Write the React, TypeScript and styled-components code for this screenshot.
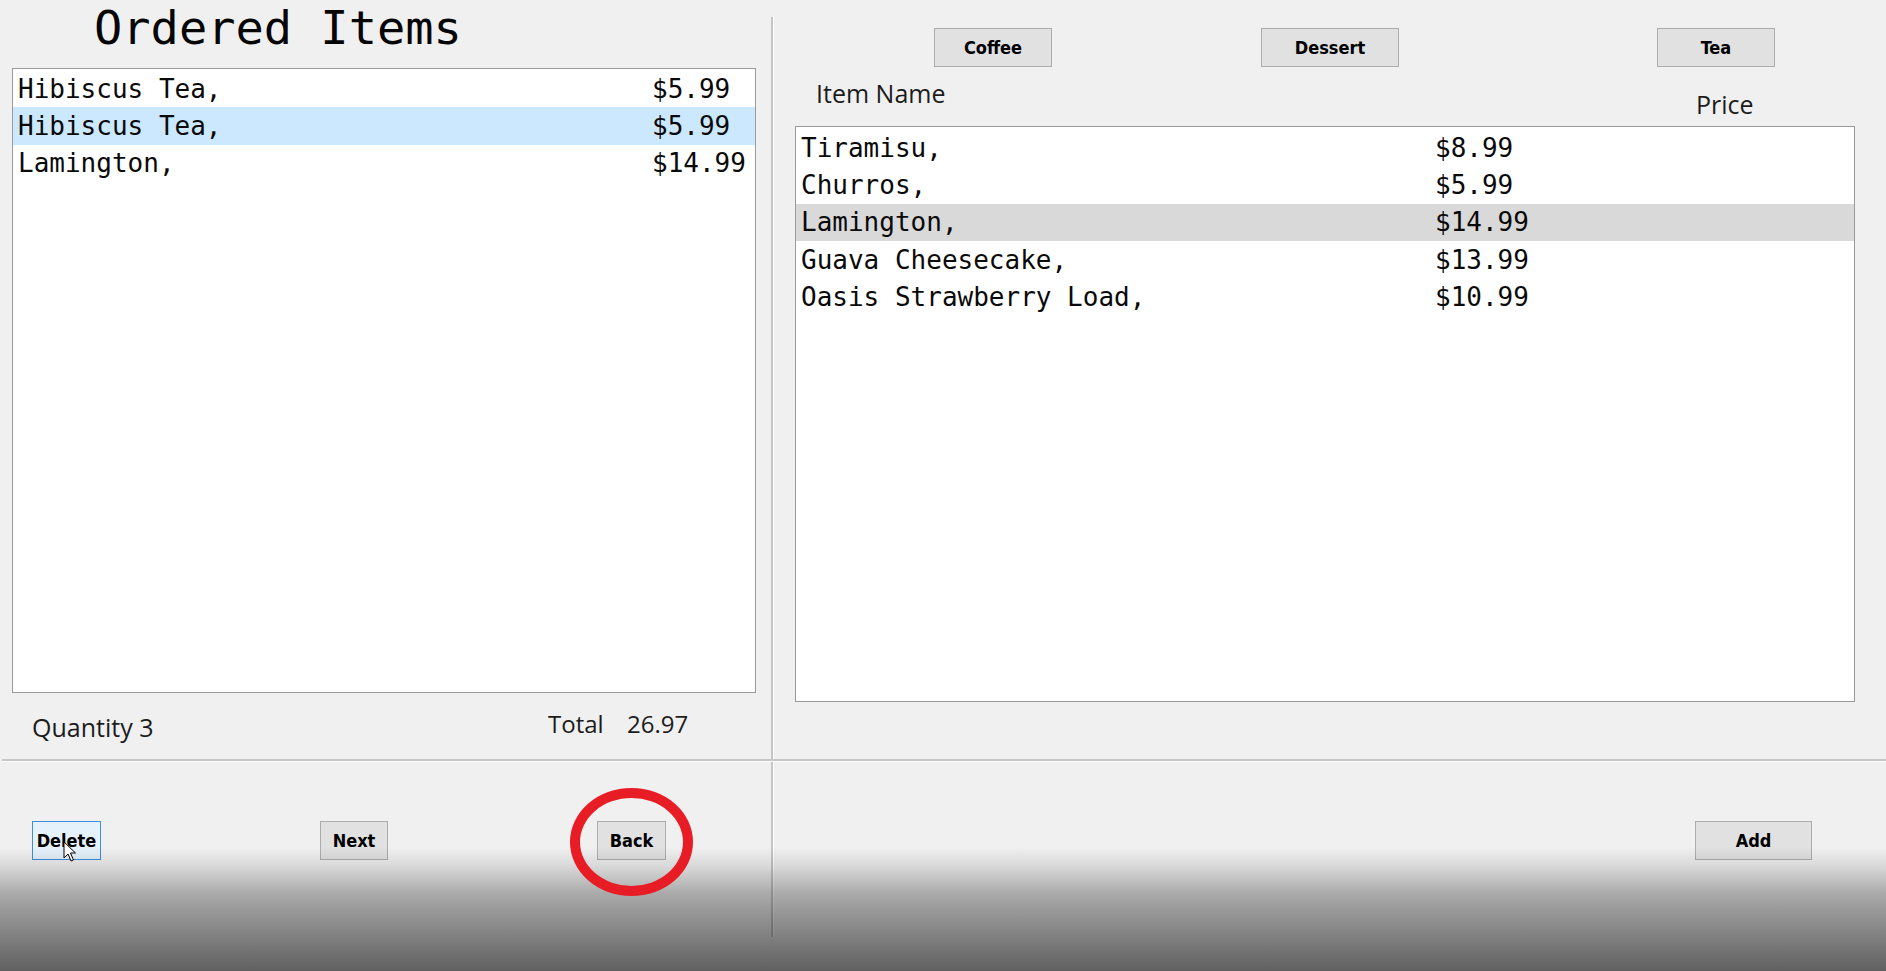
import React from "react";
import styled, { createGlobalStyle } from "styled-components";

const GlobalStyle = createGlobalStyle`
  html, body {
    margin: 0;
    padding: 0;
    background: #f0f0f0;
  }
  * { box-sizing: border-box; }
`;

const MONO = `"DejaVu Sans Mono", "Liberation Mono", monospace`;
const UI = `"Open Sans", "Noto Sans", sans-serif`;
const BTN = `"Liberation Sans Narrow", "DejaVu Sans Condensed", "Liberation Sans", sans-serif`;

const Page = styled.div`
  position: relative;
  width: 1886px;
  height: 971px;
  overflow: hidden;
  background: #f0f0f0;
  display: flex;
  flex-direction: column;
`;

const TopSection = styled.div`
  display: grid;
  grid-template-columns: 771px 1fr;
  height: 759px;
`;

const LeftPane = styled.div`
  display: flex;
  flex-direction: column;
`;

const Title = styled.h1`
  margin: 4px 0 0 0;
  padding-left: 94px;
  height: 47px;
  font-family: ${MONO};
  font-weight: 400;
  font-size: 47px;
  line-height: 47px;
  color: #050505;
`;

const ListBox = styled.div<{ $ml: number; $mt: number; $w: number; $h: number; $pt: number }>`
  margin-left: ${(p) => p.$ml}px;
  margin-top: ${(p) => p.$mt}px;
  width: ${(p) => p.$w}px;
  height: ${(p) => p.$h}px;
  background: #ffffff;
  border: 1px solid #9a9a9a;
  padding-top: ${(p) => p.$pt}px;
  display: flex;
  flex-direction: column;
`;

const Row = styled.div<{ $cols: string; $sel?: "blue" | "gray" }>`
  display: grid;
  grid-template-columns: ${(p) => p.$cols};
  align-items: center;
  height: 37.4px;
  padding-left: 5px;
  font-family: ${MONO};
  font-size: 26px;
  color: #0a0a0a;
  white-space: pre;
  background: ${(p) =>
    p.$sel === "blue" ? "#cce8ff" : p.$sel === "gray" ? "#d9d9d9" : "transparent"};
`;

const Cell = styled.span``;

const StatusRow = styled.div`
  display: grid;
  grid-template-columns: 516px 79px auto;
  padding-left: 32px;
  margin-top: 14px;
  align-items: start;
`;

const Label = styled.span<{ $size?: number; $mt?: number }>`
  font-family: ${UI};
  font-size: ${(p) => p.$size ?? 25}px;
  margin-top: ${(p) => p.$mt ?? 0}px;
  color: #1c1c1c;
  white-space: pre;
`;

const RightPane = styled.div`
  margin-top: 17px;
  border-left: 2px solid #c6c6c6;
  box-shadow: inset 1px 0 0 #ffffff;
  display: flex;
  flex-direction: column;
`;

const CategoryBar = styled.div`
  display: flex;
  align-items: flex-start;
  padding-left: 161px;
  margin-top: 11px;
`;

const HeaderRow = styled.div`
  display: grid;
  grid-template-columns: 880px auto;
  padding-left: 43px;
  height: 50px;
  margin-top: 9px;
  align-items: start;
`;

const Button = styled.button<{ $w: number; $ml?: number; $focus?: boolean }>`
  flex: none;
  width: ${(p) => p.$w}px;
  height: 39px;
  margin-left: ${(p) => p.$ml ?? 0}px;
  padding: 0;
  background: ${(p) => (p.$focus ? "#e5f1fb" : "#e1e1e1")};
  border: 1px solid ${(p) => (p.$focus ? "#3d8ee0" : "#adadad")};
  border-radius: 0;
  font-family: ${BTN};
  font-weight: 700;
  font-size: 18px;
  color: #000;
  display: flex;
  align-items: center;
  justify-content: center;
`;

const HRule = styled.div`
  margin-left: 2px;
  height: 3px;
  border-top: 2px solid #c6c6c6;
  border-bottom: 1px solid #ffffff;
`;

const BottomSection = styled.div`
  display: grid;
  grid-template-columns: 771px 1fr;
  flex: 1;
  align-items: start;
`;

const ActionBar = styled.div`
  display: flex;
  align-items: flex-start;
  padding-top: 59px;
  padding-left: 32px;
`;

const RightActions = styled.div`
  height: 175px;
  border-left: 2px solid #c6c6c6;
  box-shadow: inset 1px 0 0 #ffffff;
  display: flex;
  align-items: flex-start;
  padding-top: 59px;
  padding-left: 922px;
`;

const Fade = styled.div`
  position: absolute;
  left: 0;
  right: 0;
  bottom: 0;
  height: 124px;
  pointer-events: none;
  background: linear-gradient(
    to bottom,
    rgba(0, 0, 0, 0) 0%,
    rgba(0, 0, 0, 0.1) 16%,
    rgba(0, 0, 0, 0.29) 37%,
    rgba(0, 0, 0, 0.43) 65%,
    rgba(0, 0, 0, 0.6) 100%
  );
  z-index: 5;
`;

const Annotation = styled.div`
  position: absolute;
  left: 570px;
  top: 788px;
  width: 123px;
  height: 108px;
  border: 10px solid #e81c24;
  border-radius: 50%;
  z-index: 6;
  pointer-events: none;
`;

const Cursor = styled.svg`
  position: absolute;
  left: 63px;
  top: 841px;
  z-index: 4;
`;

const ordered = [
  { name: "Hibiscus Tea,", price: "$5.99" },
  { name: "Hibiscus Tea,", price: "$5.99", sel: true },
  { name: "Lamington,", price: "$14.99" },
];

const desserts = [
  { name: "Tiramisu,", price: "$8.99" },
  { name: "Churros,", price: "$5.99" },
  { name: "Lamington,", price: "$14.99", sel: true },
  { name: "Guava Cheesecake,", price: "$13.99" },
  { name: "Oasis Strawberry Load,", price: "$10.99" },
];

export default function App() {
  return (
    <>
      <GlobalStyle />
      <Page>
        <TopSection>
          <LeftPane>
            <Title>Ordered Items</Title>
            <ListBox $ml={12} $mt={17} $w={744} $h={625} $pt={1}>
              {ordered.map((it, i) => (
                <Row key={i} $cols="634px auto" $sel={it.sel ? "blue" : undefined}>
                  <Cell>{it.name}</Cell>
                  <Cell>{it.price}</Cell>
                </Row>
              ))}
            </ListBox>
            <StatusRow>
              <Label $mt={3}>Quantity 3</Label>
              <Label $size={24}>Total</Label>
              <Label $size={24}>26.97</Label>
            </StatusRow>
          </LeftPane>
          <RightPane>
            <CategoryBar>
              <Button $w={118}>Coffee</Button>
              <Button $w={138} $ml={209}>Dessert</Button>
              <Button $w={118} $ml={258}>Tea</Button>
            </CategoryBar>
            <HeaderRow>
              <Label>Item Name</Label>
              <Label $mt={11}>Price</Label>
            </HeaderRow>
            <ListBox $ml={22} $mt={0} $w={1060} $h={576} $pt={2}>
              {desserts.map((it, i) => (
                <Row key={i} $cols="634px auto" $sel={it.sel ? "gray" : undefined}>
                  <Cell>{it.name}</Cell>
                  <Cell>{it.price}</Cell>
                </Row>
              ))}
            </ListBox>
          </RightPane>
        </TopSection>
        <HRule />
        <BottomSection>
          <ActionBar>
            <Button $w={69} $focus>Delete</Button>
            <Button $w={68} $ml={219}>Next</Button>
            <Button $w={69} $ml={209}>Back</Button>
          </ActionBar>
          <RightActions>
            <Button $w={117}>Add</Button>
          </RightActions>
        </BottomSection>
        <Cursor width="14" height="22" viewBox="0 0 14 22">
          <path
            d="M1 1 L1 17 L5 13 L8 20 L10.5 19 L7.5 12 L12.5 12 Z"
            fill="#ffffff"
            stroke="#000000"
            strokeWidth="1"
            strokeLinejoin="round"
          />
        </Cursor>
        <Fade />
        <Annotation />
      </Page>
    </>
  );
}
